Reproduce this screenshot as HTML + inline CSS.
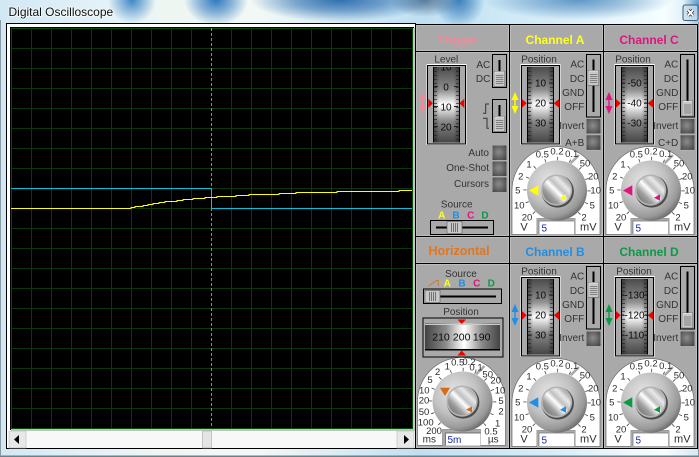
<!DOCTYPE html>
<html><head><meta charset="utf-8"><title>Digital Oscilloscope</title>
<style>
html,body{margin:0;padding:0;width:699px;height:457px;overflow:hidden}
body{background:
radial-gradient(ellipse 24px 24px at 132px 0px,#3f86c6,rgba(63,134,198,.55) 45%,rgba(63,134,198,0)),
radial-gradient(ellipse 32px 26px at 216px 0px,#2f7ac0,rgba(47,122,192,.55) 50%,rgba(47,122,192,0)),
radial-gradient(ellipse 90px 22px at 340px 0px,#2f70b0,rgba(47,112,176,.6) 50%,rgba(47,112,176,0)),
radial-gradient(ellipse 36px 17px at 425px 0px,#5c7c9c,rgba(92,124,156,.55) 50%,rgba(92,124,156,0)),
radial-gradient(ellipse 26px 28px at 459px 0px,#3a80bc,rgba(58,128,188,.55) 50%,rgba(58,128,188,0)),
radial-gradient(ellipse 95px 20px at 578px 0px,#5f97c6,rgba(95,151,198,.55) 50%,rgba(95,151,198,0)),
radial-gradient(ellipse 16px 26px at 699px 6px,#4f8fc6,rgba(79,143,198,.5) 45%,rgba(79,143,198,0)),
linear-gradient(90deg,#d2e8f4,#e6f4f8 120px,#eef6f2 170px,#f2f8f6 260px,#bfe0f2 420px,#d8eef8 560px,#f6feff 665px,#d0e8f4 699px);
position:relative}
svg{position:absolute;left:0;top:0;display:block}
text{font-family:"Liberation Sans",sans-serif;fill:#333;font-size:10px}
.m{text-anchor:middle}.r{text-anchor:end}
.t{font-size:12px;font-weight:bold;text-anchor:middle}
.d{font-size:9.5px;text-anchor:middle;fill:#2c2c2c}
.u{font-size:11px;text-anchor:middle;fill:#2c2c2c}
.n{fill:#0c0c0c;font-size:10px;text-anchor:middle}
.s{font-size:10px;font-weight:bold;text-anchor:middle}
</style></head><body>
<svg width="699" height="457" viewBox="0 0 699 457" xmlns="http://www.w3.org/2000/svg">
<defs>
<linearGradient id="rol" x1="0" y1="0" x2="0" y2="1"><stop offset="0" stop-color="#4c4c4c"/><stop offset=".3" stop-color="#8e8e8e"/><stop offset=".44" stop-color="#e0e0e0"/><stop offset=".5" stop-color="#fff"/><stop offset=".56" stop-color="#e0e0e0"/><stop offset=".72" stop-color="#888"/><stop offset="1" stop-color="#464646"/></linearGradient>
<linearGradient id="sh" x1="0" y1="0" x2="1" y2="0"><stop offset="0" stop-color="#000" stop-opacity=".32"/><stop offset=".22" stop-color="#000" stop-opacity="0"/><stop offset=".78" stop-color="#000" stop-opacity="0"/><stop offset="1" stop-color="#000" stop-opacity=".32"/></linearGradient>
<linearGradient id="rolh" x1="0" y1="0" x2="1" y2="0"><stop offset="0" stop-color="#424242"/><stop offset=".28" stop-color="#8c8c8c"/><stop offset=".44" stop-color="#dcdcdc"/><stop offset=".52" stop-color="#fff"/><stop offset=".6" stop-color="#dcdcdc"/><stop offset=".76" stop-color="#8a8a8a"/><stop offset="1" stop-color="#444"/></linearGradient>
<radialGradient id="btng" cx=".45" cy=".45" r=".7"><stop offset="0" stop-color="#8c8c8c"/><stop offset="1" stop-color="#444"/></radialGradient>
<radialGradient id="kn" cx=".38" cy=".35" r=".72"><stop offset="0" stop-color="#e6e6e6"/><stop offset=".5" stop-color="#c2c2c2"/><stop offset=".82" stop-color="#999"/><stop offset="1" stop-color="#5c5c5c"/></radialGradient>
<linearGradient id="kin" x1="0" y1="1" x2="1" y2="0"><stop offset="0" stop-color="#5f5f5f"/><stop offset=".3" stop-color="#a0a0a0"/><stop offset=".48" stop-color="#fff"/><stop offset=".58" stop-color="#c0c0c0"/><stop offset=".72" stop-color="#e8e8e8"/><stop offset="1" stop-color="#6a6a6a"/></linearGradient>
<clipPath id="trg"><rect x="434" y="67" width="25" height="75"/></clipPath>
<g id="thv"><rect width="10.500" height="15" fill="#c8c8c8" stroke="#6a6a6a" stroke-width=".7"/><path d="M.5 .5H10M.5 .5V14.500" stroke="#eee" stroke-width=".7" fill="none"/><path d="M1.500 4H9M1.500 6H9M1.500 8H9M1.500 10H9M1.500 12H9" stroke="#6a6a6a" stroke-width=".8"/></g>
<g id="thh"><rect width="15" height="12" fill="#c8c8c8" stroke="#6a6a6a" stroke-width=".7"/><path d="M4.500 1.500V10.500M6.500 1.500V10.500M8.500 1.500V10.500M10.500 1.500V10.500" stroke="#5c5c5c" stroke-width=".8"/></g>
<g id="btn"><rect width="15" height="15.500" fill="#c4c4c4"/><rect x=".4" y=".4" width="14.200" height="14.700" fill="url(#btng)"/></g>
<g id="sl"><rect x="586" y="54" width="15" height="63.500" fill="#fff"/><rect x="586.500" y="54.500" width="14" height="62.500" fill="#a9a9a9" stroke="#000"/><rect x="592.500" y="59.500" width="2" height="52.500" fill="#000"/></g>
<g id="slt"><rect x="492" y="54" width="15" height="34" fill="#fff"/><rect x="492.500" y="54.500" width="14" height="33" fill="#a9a9a9" stroke="#000"/><rect x="498.500" y="60" width="2" height="24" fill="#000"/></g>
<g id="rl">
<rect x="520.500" y="64" width="40" height="81" fill="#fff"/>
<rect x="521.500" y="65.500" width="38" height="78.500" fill="#a9a9a9" stroke="#000"/>
<rect x="527" y="67" width="27" height="75.500" fill="#000"/>
<rect x="528" y="67" width="25" height="75.500" fill="url(#rol)"/>
<rect x="528" y="67" width="25" height="75.500" fill="url(#sh)"/>
<path d="M529.500 67V142M551.500 67V142" stroke="#222" stroke-opacity=".75" stroke-width="3" stroke-dasharray=".9 3.100"/>
</g>
<g id="dial">
<path d="M-45 44V0A44 44 0 0 1 43 0V44H18V28H-20V44Z" fill="#fff" stroke="#6a6a6a" stroke-width=".7"/>
<circle r="32" fill="none" stroke="#444" stroke-width="3.400" stroke-dasharray=".8 11.770"/>
<path d="M13.700 -27.200L22 -35.500" stroke="#a9a9a9" stroke-width="2.500"/>
<rect x="-20" y="28" width="38" height="17" fill="#a9a9a9"/>
<circle r="30" fill="url(#kn)"/>
<circle cx=".6" cy=".8" r="16.300" fill="#4c4c4c"/>
<circle cx="-.4" cy="-.4" r="15.600" fill="#b4b4b4"/>
<circle cx="-.4" cy="-.4" r="14" fill="url(#kin)"/>
</g>
</defs>

<!-- top title -->
<text x="8.500" y="16" stroke="#fff" stroke-opacity=".55" stroke-width="2" paint-order="stroke" style="font-size:12px;fill:#111">Digital Oscilloscope</text>
<rect x="683" y="5" width="15" height="15.500" rx="2" fill="#c9dfee" fill-opacity=".7" stroke="#4a5a70"/>
<path d="M688 10L693 15.500M693 10L688 15.500" stroke="#333" stroke-width="3.400"/>
<path d="M688 10L693 15.500M693 10L688 15.500" stroke="#fff" stroke-width="2"/>

<!-- window edges -->
<rect x="0" y="455.500" width="699" height="1.500" fill="#6e7f86"/>
<rect x="0" y="20" width="1" height="436" fill="#8a9aa2"/>
<rect x="698" y="22" width="1" height="434" fill="#8a9aa2"/>

<!-- scope frame -->
<rect x="6" y="23" width="410" height="426" fill="#000"/>
<rect x="7" y="24" width="408" height="424" fill="#fff"/>
<rect x="10" y="27" width="404" height="403" fill="#000"/>
<rect x="11" y="429" width="402" height="2" fill="#b8c8b8"/>
<rect x="413" y="28" width="2" height="403" fill="#c4c4c4"/>
<!-- grid -->
<g stroke="#0a380a" stroke-width="1" shape-rendering="crispEdges">
<rect x="11.500" y="28.500" width="401" height="400" fill="#000" stroke="#0a4a0a"/>
<path d="M31.500 28V428M51.500 28V428M71.500 28V428M91.500 28V428M111.500 28V428M131.500 28V428M151.500 28V428M171.500 28V428M191.500 28V428M231.500 28V428M251.500 28V428M271.500 28V428M291.500 28V428M311.500 28V428M331.500 28V428M351.500 28V428M371.500 28V428M391.500 28V428"/>
<path d="M11 48.500H412M11 68.500H412M11 88.500H412M11 108.500H412M11 128.500H412M11 148.500H412M11 168.500H412M11 188.500H412M11 208.500H412M11 228.500H412M11 248.500H412M11 268.500H412M11 288.500H412M11 308.500H412M11 328.500H412M11 348.500H412M11 368.500H412M11 388.500H412M11 408.500H412"/>
</g>
<path d="M211.500 28V428" stroke="#8c8c8c" stroke-width="1" stroke-dasharray="3 2" shape-rendering="crispEdges"/>
<path d="M11 188.500H211.500V208.500H412" fill="none" stroke="#00c4dc" stroke-width="1" shape-rendering="crispEdges"/>
<path d="M11 208.500H131V207.500H135V206.500H143V205.500H148V204.500H153V203.500H159V202.500H165V201.500H177V200.500H183V199.500H193V198.500H205V197.500H217V196.500H236V195.500H249V194.500H279V193.500H296V192.500H337V191.500H399V190.500H412" fill="none" stroke="#ffff00" stroke-width="1" shape-rendering="crispEdges"/>
<!-- scrollbar -->
<rect x="9" y="431" width="405" height="17" fill="#f8f8f8"/>
<rect x="9" y="431" width="17" height="17" fill="#e8e8e8" stroke="#bbb" stroke-width=".6"/>
<path d="M14 439.500L19 435V444Z" fill="#000"/>
<rect x="397" y="431" width="17" height="17" fill="#e8e8e8" stroke="#bbb" stroke-width=".6"/>
<path d="M409 439.500L404 435V444Z" fill="#000"/>
<rect x="202.500" y="431" width="9" height="17" fill="#e4e4e4" stroke="#aaa" stroke-width=".6"/>

<!-- panels -->
<rect x="415" y="24" width="283" height="425" fill="#000"/>
<g fill="#a9a9a9" stroke="#bdbdbd" stroke-width="1">
<rect x="416.500" y="25.500" width="92" height="25"/>
<rect x="510.500" y="25.500" width="92" height="25"/>
<rect x="604.500" y="25.500" width="92" height="25"/>
<rect x="416.500" y="52.500" width="92" height="183"/>
<rect x="510.500" y="52.500" width="92" height="183"/>
<rect x="604.500" y="52.500" width="92" height="183"/>
<rect x="416.500" y="237.500" width="92" height="25"/>
<rect x="510.500" y="237.500" width="92" height="25"/>
<rect x="604.500" y="237.500" width="92" height="25"/>
<rect x="416.500" y="264.500" width="92" height="183"/>
<rect x="510.500" y="264.500" width="92" height="183"/>
<rect x="604.500" y="264.500" width="92" height="183"/>
</g>

<text class="t" x="458" y="44" style="fill:#ee8c9a">Trigger</text>
<text class="t" x="555" y="44" style="fill:#ffff20">Channel A</text>
<text class="t" x="649" y="44" style="fill:#e0147f">Channel C</text>
<text class="t" x="459" y="255" style="fill:#e2761e;font-size:12.500px">Horizontal</text>
<text class="t" x="555" y="256" style="fill:#1e8fe6">Channel B</text>
<text class="t" x="649" y="256" style="fill:#0a9a46">Channel D</text>

<!-- TRIGGER -->
<text class="m" x="446.300" y="62.500">Level</text>
<use href="#rl" x="-94"/>
<path d="M434 86.500h4M454 86.500h4M434 106.500h4M454 106.500h4M434 126.500h4M454 126.500h4" stroke="#222"/>
<g clip-path="url(#trg)">
<text class="n" x="446" y="70.500">10</text>
<text class="n" x="446" y="90.500">0</text>
<text class="n" x="446" y="110.500">10</text>
<text class="n" x="446" y="130.500">20</text>
</g>
<path d="M428.300 98.700L432.800 103.300L428.300 108Z" fill="#f00000"/>
<path d="M464.300 98.700L459.400 103.300L464.300 108Z" fill="#f00000"/>
<path d="M422.300 91.700L425.800 99.500H423V105.500H425.800L422.300 113.300L418.800 105.500H421.600V99.500H418.800Z" fill="#ee8c9a"/>
<text class="r" x="490.300" y="68">AC</text>
<text class="r" x="490.300" y="82">DC</text>
<use href="#slt"/>
<use href="#thv" x="494.300" y="71.500"/>
<use href="#slt" y="45"/>
<use href="#thv" x="494.300" y="116.500"/>
<path d="M483 113.300H485.700V104H489M483 118.300H487V128.300H489" fill="none" stroke="#333"/>
<text class="r" x="489" y="156">Auto</text>
<text class="r" x="489" y="171">One-Shot</text>
<text class="r" x="489" y="187">Cursors</text>
<use href="#btn" x="492" y="145"/>
<use href="#btn" x="492" y="161"/>
<use href="#btn" x="492" y="177"/>
<text class="m" x="456.700" y="207.500">Source</text>
<text class="s" x="441.700" y="218.500" style="fill:#ffff20">A</text>
<text class="s" x="456" y="218.500" style="fill:#1e8fe6">B</text>
<text class="s" x="470.700" y="218.500" style="fill:#e0147f">C</text>
<text class="s" x="485" y="218.500" style="fill:#0a9a46">D</text>
<rect x="430" y="220" width="64" height="15" fill="#fff"/>
<rect x="430.500" y="220.500" width="63" height="14" fill="#a9a9a9" stroke="#000"/>
<rect x="436" y="226.500" width="52" height="2" fill="#000"/>
<use href="#thh" x="447" y="221.500"/>

<!-- CHANNEL A -->
<text class="m" x="539" y="62.500">Position</text>
<use href="#rl"/>
<path d="M528 83h4M549 83h4M528 103h4M549 103h4M528 123h4M549 123h4" stroke="#222"/>
<text class="n" x="540.500" y="86.500">10</text>
<text class="n" x="540.500" y="106.500">20</text>
<text class="n" x="540.500" y="126.500">30</text>
<path d="M521.700 98.700L526.700 103.300L521.700 108Z" fill="#f00000"/>
<path d="M559.300 98.700L553.800 103.300L559.300 108Z" fill="#f00000"/>
<path d="M515 92L518.500 100H515.700V106H518.500L515 114L511.500 106H514.300V100H511.500Z" fill="#ffff00"/>
<text class="r" x="584.300" y="67.500">AC</text>
<text class="r" x="584.300" y="82">DC</text>
<text class="r" x="584.300" y="96">GND</text>
<text class="r" x="584.300" y="110">OFF</text>
<text class="r" x="584.300" y="129">Invert</text>
<text class="r" x="584.300" y="146">A+B</text>
<use href="#sl"/>
<use href="#thv" x="588.300" y="70.500"/>
<use href="#btn" x="586" y="118.500"/>
<use href="#btn" x="586" y="134.800"/>
<g transform="translate(557,190.500)">
<use href="#dial"/>
<text class="d" x="-14.700" y="-33">0.5</text><text class="d" x="0" y="-36">0.2</text><text class="d" x="14.700" y="-33.500">0.1</text><text class="d" x="-28" y="-23.200">1</text><text class="d" x="-36.300" y="-10.800">2</text><text class="d" x="-39.300" y="3">5</text><text class="d" x="-37.700" y="18">10</text><text class="d" x="-30" y="30">20</text><text class="u" x="-33" y="40">V</text><text class="d" x="28" y="-24">50</text><text class="d" x="36.300" y="-10.800">20</text><text class="d" x="38.700" y="3">10</text><text class="d" x="35.300" y="18">5</text><text class="d" x="27" y="30">2</text><text class="u" x="31.300" y="40">mV</text>
<path d="M-28 0L-18.700 -5.300V5.300Z" fill="#ffff00"/><path d="M3 7.200L9 3.800V10.200Z" fill="#ffff00"/>
<rect x="-18" y="30.500" width="35" height="13" fill="#fff"/><path d="M-18 43.500V30.500H17" fill="none" stroke="#777" stroke-width=".7"/>
<text x="-15.500" y="41" style="fill:#1a2aa0;font-size:10px">5</text>
</g>

<!-- CHANNEL C -->
<text class="m" x="633" y="62.500">Position</text>
<use href="#rl" x="94"/>
<path d="M622 83h3M644 83h3M622 103h3M644 103h3M622 123h3M644 123h3" stroke="#222"/>
<text class="n" x="634.500" y="86.500">-50</text>
<text class="n" x="634.500" y="106.500">-40</text>
<text class="n" x="634.500" y="126.500">-30</text>
<path d="M615.700 98.700L620.700 103.300L615.700 108Z" fill="#f00000"/>
<path d="M653.300 98.700L647.800 103.300L653.300 108Z" fill="#f00000"/>
<path d="M609 92L612.500 100H609.700V106H612.500L609 114L605.500 106H608.300V100H605.500Z" fill="#e0147f"/>
<text class="r" x="678.300" y="67.500">AC</text>
<text class="r" x="678.300" y="82">DC</text>
<text class="r" x="678.300" y="96">GND</text>
<text class="r" x="678.300" y="110">OFF</text>
<text class="r" x="678.300" y="129">Invert</text>
<text class="r" x="678.300" y="146">C+D</text>
<use href="#sl" x="94"/>
<use href="#thv" x="682.300" y="101"/>
<use href="#btn" x="680" y="118.500"/>
<use href="#btn" x="680" y="134.800"/>
<g transform="translate(651,190.500)">
<use href="#dial"/>
<text class="d" x="-14.700" y="-33">0.5</text><text class="d" x="0" y="-36">0.2</text><text class="d" x="14.700" y="-33.500">0.1</text><text class="d" x="-28" y="-23.200">1</text><text class="d" x="-36.300" y="-10.800">2</text><text class="d" x="-39.300" y="3">5</text><text class="d" x="-37.700" y="18">10</text><text class="d" x="-30" y="30">20</text><text class="u" x="-33" y="40">V</text><text class="d" x="28" y="-24">50</text><text class="d" x="36.300" y="-10.800">20</text><text class="d" x="38.700" y="3">10</text><text class="d" x="35.300" y="18">5</text><text class="d" x="27" y="30">2</text><text class="u" x="31.300" y="40">mV</text>
<path d="M-28 0L-18.700 -5.300V5.300Z" fill="#e0147f"/><path d="M3 7.200L9 3.800V10.200Z" fill="#e0147f"/>
<rect x="-18" y="30.500" width="35" height="13" fill="#fff"/><path d="M-18 43.500V30.500H17" fill="none" stroke="#777" stroke-width=".7"/>
<text x="-15.500" y="41" style="fill:#1a2aa0;font-size:10px">5</text>
</g>

<!-- CHANNEL B -->
<text class="m" x="539" y="274.500">Position</text>
<use href="#rl" y="212"/>
<path d="M528 295h4M549 295h4M528 315h4M549 315h4M528 335h4M549 335h4" stroke="#222"/>
<text class="n" x="540.500" y="298.500">10</text>
<text class="n" x="540.500" y="318.500">20</text>
<text class="n" x="540.500" y="338.500">30</text>
<path d="M521.700 310.700L526.700 315.300L521.700 320Z" fill="#f00000"/>
<path d="M559.300 310.700L553.800 315.300L559.300 320Z" fill="#f00000"/>
<path d="M515 304L518.500 312H515.700V318H518.500L515 326L511.500 318H514.300V312H511.500Z" fill="#1e8fe6"/>
<text class="r" x="584.300" y="279.500">AC</text>
<text class="r" x="584.300" y="294">DC</text>
<text class="r" x="584.300" y="308">GND</text>
<text class="r" x="584.300" y="322">OFF</text>
<text class="r" x="584.300" y="341">Invert</text>
<use href="#sl" y="212"/>
<use href="#thv" x="588.300" y="282.500"/>
<use href="#btn" x="586" y="331"/>
<g transform="translate(557,402.500)">
<use href="#dial"/>
<text class="d" x="-14.700" y="-33">0.5</text><text class="d" x="0" y="-36">0.2</text><text class="d" x="14.700" y="-33.500">0.1</text><text class="d" x="-28" y="-23.200">1</text><text class="d" x="-36.300" y="-10.800">2</text><text class="d" x="-39.300" y="3">5</text><text class="d" x="-37.700" y="18">10</text><text class="d" x="-30" y="30">20</text><text class="u" x="-33" y="40">V</text><text class="d" x="28" y="-24">50</text><text class="d" x="36.300" y="-10.800">20</text><text class="d" x="38.700" y="3">10</text><text class="d" x="35.300" y="18">5</text><text class="d" x="27" y="30">2</text><text class="u" x="31.300" y="40">mV</text>
<path d="M-28 0L-18.700 -5.300V5.300Z" fill="#1e8fe6"/><path d="M3 7.200L9 3.800V10.200Z" fill="#1e8fe6"/>
<rect x="-18" y="30.500" width="35" height="13" fill="#fff"/><path d="M-18 43.500V30.500H17" fill="none" stroke="#777" stroke-width=".7"/>
<text x="-15.500" y="41" style="fill:#1a2aa0;font-size:10px">5</text>
</g>

<!-- CHANNEL D -->
<text class="m" x="634" y="274.500">Position</text>
<use href="#rl" x="94" y="212"/>
<path d="M622 295h2M645 295h2M622 315h2M645 315h2M622 335h2M645 335h2" stroke="#222"/>
<text class="n" x="634.500" y="298.500">-130</text>
<text class="n" x="634.500" y="318.500">-120</text>
<text class="n" x="634.500" y="338.500">-110</text>
<path d="M615.700 310.700L620.700 315.300L615.700 320Z" fill="#f00000"/>
<path d="M653.300 310.700L647.800 315.300L653.300 320Z" fill="#f00000"/>
<path d="M609 304L612.500 312H609.700V318H612.500L609 326L605.500 318H608.300V312H605.500Z" fill="#0a9a46"/>
<text class="r" x="678.300" y="279.500">AC</text>
<text class="r" x="678.300" y="294">DC</text>
<text class="r" x="678.300" y="308">GND</text>
<text class="r" x="678.300" y="322">OFF</text>
<text class="r" x="678.300" y="341">Invert</text>
<use href="#sl" x="94" y="212"/>
<use href="#thv" x="682.300" y="313"/>
<use href="#btn" x="680" y="331"/>
<g transform="translate(651,402.500)">
<use href="#dial"/>
<text class="d" x="-14.700" y="-33">0.5</text><text class="d" x="0" y="-36">0.2</text><text class="d" x="14.700" y="-33.500">0.1</text><text class="d" x="-28" y="-23.200">1</text><text class="d" x="-36.300" y="-10.800">2</text><text class="d" x="-39.300" y="3">5</text><text class="d" x="-37.700" y="18">10</text><text class="d" x="-30" y="30">20</text><text class="u" x="-33" y="40">V</text><text class="d" x="28" y="-24">50</text><text class="d" x="36.300" y="-10.800">20</text><text class="d" x="38.700" y="3">10</text><text class="d" x="35.300" y="18">5</text><text class="d" x="27" y="30">2</text><text class="u" x="31.300" y="40">mV</text>
<path d="M-28 0L-18.700 -5.300V5.300Z" fill="#0a9a46"/><path d="M3 7.200L9 3.800V10.200Z" fill="#0a9a46"/>
<rect x="-18" y="30.500" width="35" height="13" fill="#fff"/><path d="M-18 43.500V30.500H17" fill="none" stroke="#777" stroke-width=".7"/>
<text x="-15.500" y="41" style="fill:#1a2aa0;font-size:10px">5</text>
</g>

<!-- HORIZONTAL -->
<text class="m" x="461" y="277">Source</text>
<path d="M428.500 286L436.500 280.500H438L438.500 286" fill="none" stroke="#d8762a" stroke-width="1"/>
<text class="s" x="447.300" y="286.500" style="fill:#ffff20">A</text>
<text class="s" x="462" y="286.500" style="fill:#1e8fe6">B</text>
<text class="s" x="476.700" y="286.500" style="fill:#e0147f">C</text>
<text class="s" x="491.300" y="286.500" style="fill:#0a9a46">D</text>
<rect x="423" y="288.500" width="79" height="15.500" fill="#fff"/>
<rect x="423.500" y="289" width="78" height="14.500" fill="#a9a9a9" stroke="#000"/>
<rect x="426" y="295.500" width="70" height="2" fill="#000"/>
<use href="#thh" x="425" y="290.500"/>
<text class="m" x="461" y="315">Position</text>
<rect x="422.500" y="317.500" width="81" height="40" fill="#fff"/>
<rect x="423" y="318" width="80" height="39" fill="#a9a9a9" stroke="#000"/>
<rect x="425" y="323.500" width="75" height="26" fill="url(#rolh)"/>
<rect x="425" y="349" width="75" height="1.500" fill="#000"/>
<rect x="425" y="324" width="75" height="1" fill="#ccc"/>
<text class="n" x="441" y="340.500" style="font-size:10.500px">210</text>
<text class="n" x="461.700" y="340.500" style="font-size:10.500px">200</text>
<text class="n" x="481.700" y="340.500" style="font-size:10.500px">190</text>
<path d="M457.500 319.500H466L461.700 324Z" fill="#f00000"/>
<path d="M457.500 355.500H466L461.700 350.500Z" fill="#f00000"/>
<g transform="translate(462.500,401.500)"><use href="#dial"/></g>
<text class="d" x="447.300" y="369.700">1</text><text class="d" x="437.700" y="375">2</text><text class="d" x="430" y="383">5</text><text class="d" x="424.300" y="393.300">10</text><text class="d" x="424" y="403.300">20</text><text class="d" x="424" y="415">50</text><text class="d" x="425.700" y="425.700">100</text><text class="d" x="434" y="434">200</text><text class="u" x="429.300" y="442.300" style="font-size:10px">ms</text>
<text class="d" x="457.700" y="365.700">0.5</text><text class="d" x="469" y="365">0.2</text><text class="d" x="476" y="370.700">0.1</text><text class="d" x="487.700" y="377.300">50</text><text class="d" x="495.700" y="383.300">20</text><text class="d" x="500" y="393.300">10</text><text class="d" x="501" y="404">5</text><text class="d" x="501" y="414.700">2</text><text class="d" x="497.700" y="426.300">1</text><text class="d" x="491" y="434.700">0.5</text><text class="u" x="493.300" y="442.300" style="font-size:10px">µs</text>
<path d="M440 387.700H450L445 396Z" fill="#d96a14"/>
<path d="M466 409.500L472 406.500V412.500Z" fill="#d96a14"/>
<rect x="445.500" y="433" width="35" height="12.500" fill="#fff"/>
<path d="M445.500 445.500V433H480.500" fill="none" stroke="#555" stroke-width=".7"/>
<text x="447.500" y="443" style="fill:#1a2aa0;font-size:10px">5m</text>
</svg>
</body></html>
